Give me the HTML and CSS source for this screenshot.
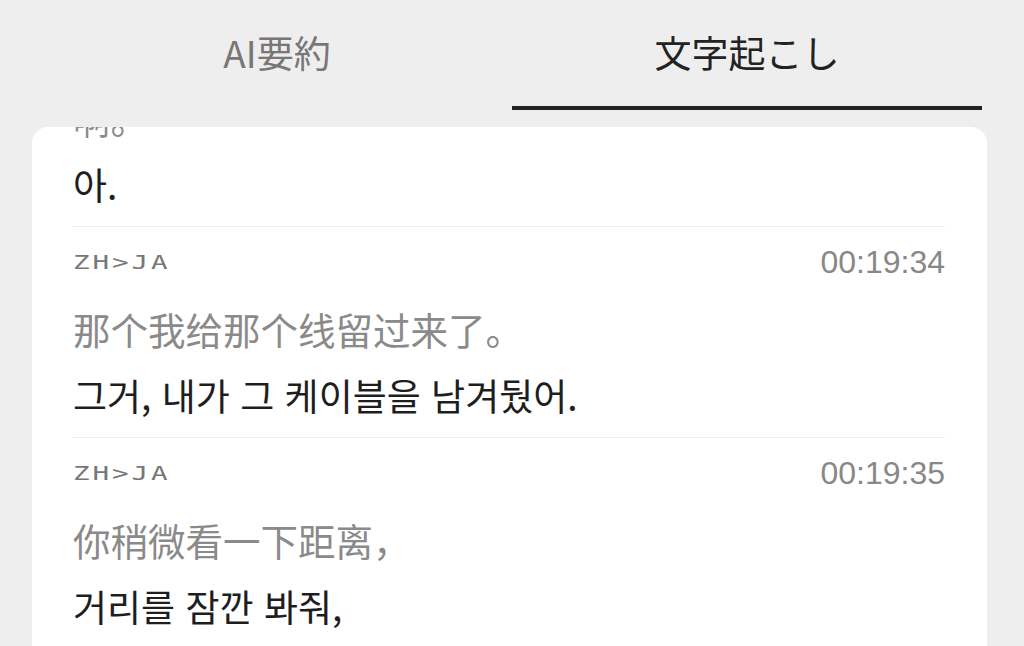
FILE: index.html
```html
<!DOCTYPE html>
<html lang="ja">
<head>
    <meta charset="UTF-8">
    <meta name="viewport" content="width=device-width, initial-scale=1.0">
    <title>文字起こし</title>
    <link rel="stylesheet" href="styles.css">
</head>
<body>
    <div class="app">
        <div class="tabs">
            <div class="tab">AI要約</div>
            <div class="tab active">文字起こし</div>
        </div>

        <div class="transcript">
            <div class="entries">
                <!-- tail of the previous item, partly scrolled out -->
                <div class="entry">
                    <div class="source" lang="zh-CN">啊。</div>
                    <div class="target" lang="ko">아.</div>
                </div>

                <div class="entry">
                    <div class="meta">
                        <span class="lang">ZH&gt;JA</span>
                        <span class="time">00:19:34</span>
                    </div>
                    <div class="source" lang="zh-CN">那个我给那个线留过来了。</div>
                    <div class="target" lang="ko">그거, 내가 그 케이블을 남겨뒀어.</div>
                </div>

                <div class="entry">
                    <div class="meta">
                        <span class="lang">ZH&gt;JA</span>
                        <span class="time">00:19:35</span>
                    </div>
                    <div class="source" lang="zh-CN">你稍微看一下距离，</div>
                    <div class="target" lang="ko">거리를 잠깐 봐줘,</div>
                </div>
            </div>
        </div>
    </div>
</body>
</html>
```

FILE: styles.css
```css
body {
    margin: 0;
    padding: 0;
    background-color: #eeeeee;
    font-family: "Noto Sans CJK JP", "Noto Sans", sans-serif;
}

.app {
    height: 100vh;
    display: flex;
    flex-direction: column;
    overflow: hidden;
}

/* tab bar */
.tabs {
    display: flex;
    padding: 0 42px;
    height: 110px;
    flex-shrink: 0;
}

.tab {
    flex: 1;
    display: flex;
    align-items: center;
    justify-content: center;
    padding-bottom: 2px;
    font-size: 37px;
    line-height: 1.3;
    color: #777777;
    border-bottom: 4px solid transparent;
}

.tab.active {
    color: #222222;
    border-bottom-color: #222222;
}

/* transcript card */
.transcript {
    flex: 1;
    min-height: 0;
    margin: 17px 37px 0 32px;
    padding: 0 42px 0 41px;
    background: #fff;
    border-radius: 16px 16px 0 0;
    overflow: hidden;
}

/* list is scrolled so the first item is only half in view */
.entries {
    margin-top: -63px;
}

.entry {
    padding: 21px 0 9px;
    border-bottom: 1px solid #eeeeee;
}

.meta {
    display: flex;
    justify-content: space-between;
    align-items: center;
    height: 28px;
    margin-bottom: 20px;
}

.lang {
    display: inline-block;
    font-family: "DejaVu Sans Mono", monospace;
    font-size: 19px;
    line-height: 28px;
    letter-spacing: 2px;
    color: #777777;
    transform: scaleX(1.45);
    transform-origin: left center;
}

.time {
    font-family: "Liberation Sans", Arial, sans-serif;
    font-size: 32px;
    line-height: 28px;
    color: #888888;
}

.source {
    line-height: 66px;
    font-family: "Noto Sans CJK SC", sans-serif;
    font-size: 37.5px;
    color: #8a8a8a;
}

.target {
    line-height: 66px;
    font-family: "Noto Sans CJK KR", sans-serif;
    font-size: 37px;
    color: #1e1e1e;
}
```
